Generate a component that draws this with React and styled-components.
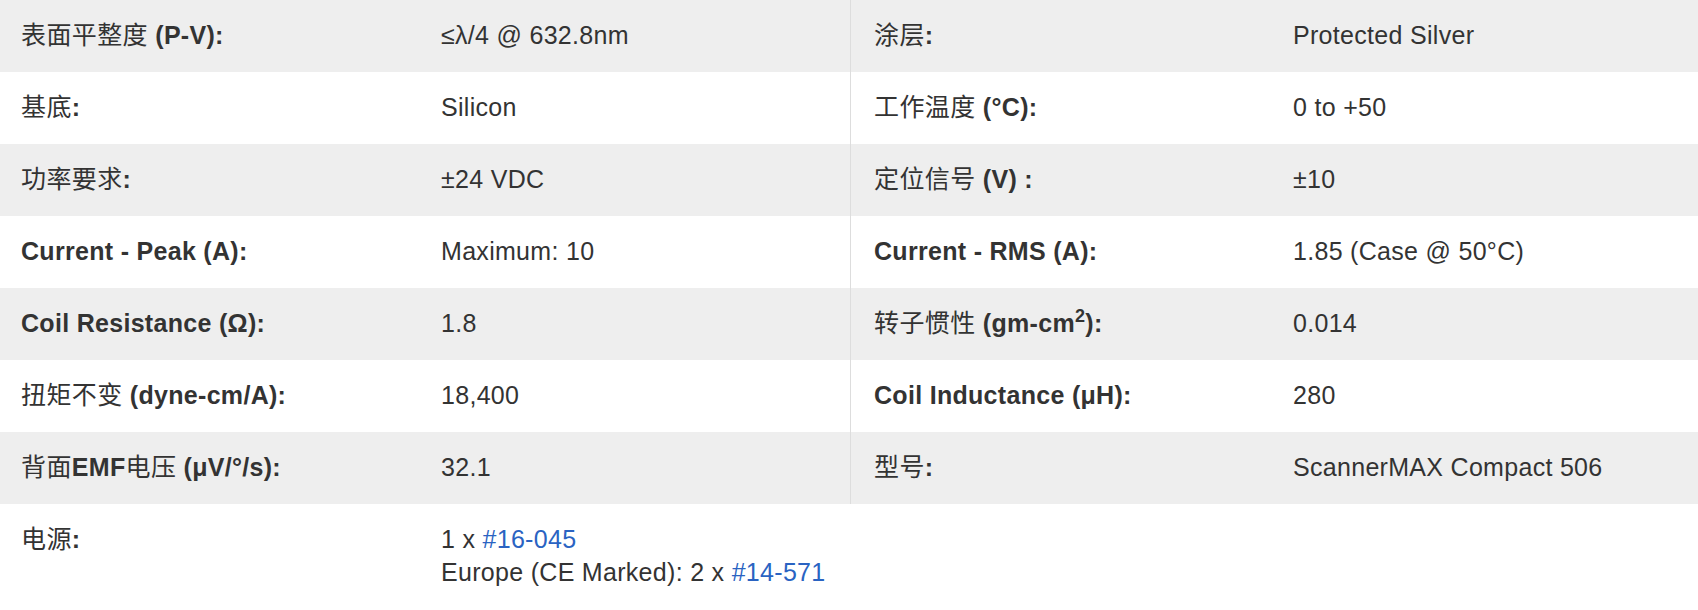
import React from "react";
import styled, { createGlobalStyle } from "styled-components";

const Global = createGlobalStyle`
  html, body { margin: 0; padding: 0; background: #fff; }
  body {
    font-family: "Liberation Sans", Arial, "Noto Sans CJK SC", sans-serif;
    color: #333;
  }
`;

const Table = styled.div`
  width: 1698px;
  display: flex;
  flex-direction: column;
  font-size: 25px;
  line-height: 33px;
  letter-spacing: 0.3px;
`;

const Row = styled.div`
  display: grid;
  grid-template-columns: 420px 430px 422px 1fr;
  background: ${(p) => (p.$shade ? "#eeeeee" : "#ffffff")};
`;

const Cell = styled.div`
  padding: 19px 10px 20px 21px;
  white-space: nowrap;
  ${(p) => p.$divider && "border-left: 1px solid #dddddd; padding-left: 23px;"}
`;

const Label = styled(Cell)`
  font-weight: 700;
`;

const Cjk = styled.span`
  font-weight: 400;
  font-family: "Noto Sans CJK SC", sans-serif;
  letter-spacing: 0.4px;
  line-height: 1;
`;

const Sup = styled.sup`
  font-size: 0.72em;
  line-height: 0;
  vertical-align: 0.55em;
`;

const Link = styled.a`
  color: #2a63c2;
  text-decoration: none;
`;

const Line = styled.div`
  height: 33px;
`;

const rows = [
  [[<Cjk key="a">表面平整度</Cjk>, " (P-V):"], "≤λ/4 @ 632.8nm", [<Cjk key="a">涂层</Cjk>, ":"], "Protected Silver"],
  [[<Cjk key="a">基底</Cjk>, ":"], "Silicon", [<Cjk key="a">工作温度</Cjk>, " (°C):"], "0 to +50"],
  [[<Cjk key="a">功率要求</Cjk>, ":"], "±24 VDC", [<Cjk key="a">定位信号</Cjk>, " (V) :"], "±10"],
  ["Current - Peak (A):", "Maximum: 10", "Current - RMS (A):", "1.85 (Case @ 50°C)"],
  ["Coil Resistance (Ω):", "1.8", [<Cjk key="a">转子惯性</Cjk>, " (gm-cm", <Sup key="s">2</Sup>, "):"], "0.014"],
  [[<Cjk key="a">扭矩不变</Cjk>, " (dyne-cm/A):"], "18,400", "Coil Inductance (μH):", "280"],
  [[<Cjk key="a">背面</Cjk>, "EMF", <Cjk key="b">电压</Cjk>, " (μV/°/s):"], "32.1", [<Cjk key="a">型号</Cjk>, ":"], "ScannerMAX Compact 506"],
];

export default function App() {
  return (
    <>
      <Global />
      <Table>
        {rows.map((r, i) => (
          <Row key={i} $shade={i % 2 === 0}>
            <Label>{r[0]}</Label>
            <Cell>{r[1]}</Cell>
            <Label $divider>{r[2]}</Label>
            <Cell>{r[3]}</Cell>
          </Row>
        ))}
        <Row>
          <Label><Cjk>电源</Cjk>:</Label>
          <Cell>
            <Line>1 x <Link href="#">#16-045</Link></Line>
            <Line>Europe (CE Marked): 2 x <Link href="#">#14-571</Link></Line>
          </Cell>
        </Row>
      </Table>
    </>
  );
}
